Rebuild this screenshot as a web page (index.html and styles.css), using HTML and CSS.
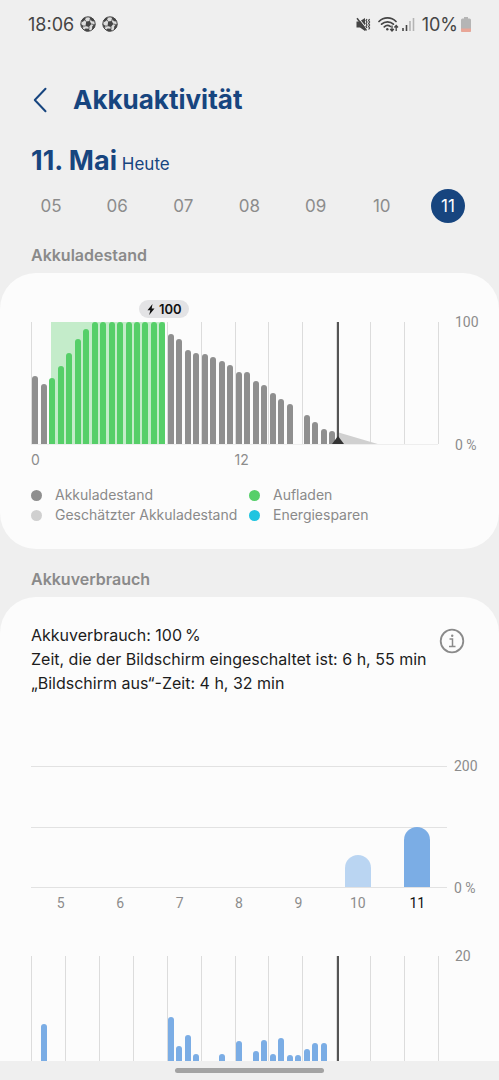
FILE: index.html
```html
<!DOCTYPE html>
<html lang="de">

<head>
    <meta charset="UTF-8">
    <meta name="viewport" content="width=device-width, initial-scale=1.0">
    <title>Akkuaktivität</title>
    <link rel="stylesheet" href="styles.css">
</head>

<body>
    <div class="status-bar">
        <div class="status-left">
            <span>18:06</span>
            <svg class="ball" viewBox="0 0 16 16">
                <circle cx="8" cy="8" r="7.2" fill="#dcdcdc" stroke="#454545" />
                <path d="M6.200 5.600 9.800 5l1.500 3-2.300 2.900-3.500-.8zM1 5l2.500-3.200L6 1.500 5 4 2.500 6zM9.500.8l4 2 1.200 2.700-2.700-.3L10 3zM15.400 8l-.8 3.500-2.600 2.300.2-3.300 1.600-2zM5.500 12.500l3.500.3.8 2.200-3.300.4-2.500-1.400zM.6 8l2.200 1.200.6 3L1.500 11z" fill="#454545" />
                <path d="M6.200 5.600 5 4M9.800 5l.4-2M11.300 8l2.500.5M9 10.900v2M5.500 10.100 3 10" stroke="#454545" stroke-width=".8" />
            </svg>
            <svg class="ball" viewBox="0 0 16 16">
                <circle cx="8" cy="8" r="7.2" fill="#dcdcdc" stroke="#454545" />
                <path d="M6.200 5.600 9.800 5l1.500 3-2.300 2.900-3.500-.8zM1 5l2.500-3.200L6 1.500 5 4 2.500 6zM9.500.8l4 2 1.200 2.700-2.700-.3L10 3zM15.400 8l-.8 3.500-2.600 2.300.2-3.300 1.600-2zM5.500 12.500l3.500.3.8 2.200-3.300.4-2.500-1.400zM.6 8l2.200 1.200.6 3L1.500 11z" fill="#454545" />
                <path d="M6.200 5.600 5 4M9.800 5l.4-2M11.300 8l2.500.5M9 10.900v2M5.500 10.100 3 10" stroke="#454545" stroke-width=".8" />
            </svg>
        </div>
        <div class="status-right">
            <svg class="mute" width="15" height="15" viewBox="0 0 15 15">
                <path d="M.5 4.500h3L9 1v13L4 10.500H.5z" fill="#454545" />
                <path d="M2 .5 12 13" stroke="#efefef" stroke-width="1.200" />
                <path d="M1 1.300 10.500 13.500" stroke="#454545" stroke-width="1.500" />
                <path d="M11 2l-1 1.500 1 1.500-1 1.500 1 1.500-1 1.500 1 1.500M13.600 2l-1 1.500 1 1.500-1 1.500 1 1.500-1 1.500 1 1.500-1 1.500" fill="none" stroke="#454545" stroke-width="1.200" />
            </svg>
            <svg width="21" height="16" viewBox="0 0 21 16">
                <path d="M1 5.500a12 12 0 0 1 17 0M3.600 8.200a8.400 8.400 0 0 1 11.800 0M6.300 10.800a4.600 4.600 0 0 1 6 -.4" fill="none" stroke="#454545" stroke-width="1.700" stroke-linecap="round" />
                <circle cx="9.300" cy="13.200" r="1.200" fill="#454545" />
                <path d="M14 9.500v5M12.200 13l1.800 2 1.800-2M18.200 15v-5M16.400 11.500l1.800-2 1.800 2" fill="none" stroke="#454545" stroke-width="1.300" />
            </svg>
            <svg width="13" height="14" viewBox="0 0 13 14">
                <path d="M1 11v3M4.500 8v6" stroke="#454545" stroke-width="1.600" />
                <path d="M8 4v10M11.500 1v13" stroke="#b4b4b4" stroke-width="1.600" />
            </svg>
            <span class="percent">10%</span>
            <svg width="10" height="15" viewBox="0 0 10 15">
                <path d="M3 0h4v1.500h1.500A1.500 1.500 0 0 1 10 3v10.500a1.500 1.500 0 0 1-1.500 1.500h-7A1.500 1.500 0 0 1 0 13.500V3a1.500 1.500 0 0 1 1.500-1.500H3z" fill="#b5b5b5" />
                <path d="M0 11.500h10v2a1.500 1.500 0 0 1-1.500 1.500h-7A1.500 1.500 0 0 1 0 13.500z" fill="#e9a697" />
            </svg>
        </div>
    </div>

    <header class="header">
        <button type="button" class="back" aria-label="Zurück">
            <svg width="14" height="26" viewBox="0 0 14 26">
                <path d="M12.500 1.800 1.800 13l10.700 11.200" fill="none" stroke="#17457f" stroke-width="2" stroke-linecap="round" stroke-linejoin="round" />
            </svg>
        </button>
        <h1>Akkuaktivität</h1>
    </header>

    <div class="date">
        <strong>11. Mai</strong>
        <span>Heute</span>
    </div>

    <nav class="days">
        <button type="button" class="day">05</button>
        <button type="button" class="day">06</button>
        <button type="button" class="day">07</button>
        <button type="button" class="day">08</button>
        <button type="button" class="day">09</button>
        <button type="button" class="day">10</button>
        <button type="button" class="day selected">11</button>
    </nav>

    <h2>Akkuladestand</h2>
    <section class="card level-card">
        <div class="chart">
            <div class="plot" id="level">
                <div class="charging"></div>
                <svg class="estimate" viewBox="0 0 40 12" preserveAspectRatio="none">
                    <path d="M0 0 40 12H0z" fill="#d0d0d0" />
                </svg>
                <div class="now marker"></div>
                <div class="bubble">
                    <svg width="8" height="11" viewBox="0 0 8 11">
                        <path d="M5.500 0 .5 6.200h2.800L2.200 11l5.300-6.500H4.700z" fill="#111" />
                    </svg>
                    100
                </div>
            </div>
            <div class="scale"><span>100</span><span>0 %</span></div>
        </div>
        <div class="hours"><span>0</span><span>12</span></div>
        <ul class="legend">
            <li><i class="dot gray"></i>Akkuladestand</li>
            <li><i class="dot green"></i>Aufladen</li>
            <li><i class="dot light"></i>Geschätzter Akkuladestand</li>
            <li><i class="dot cyan"></i>Energiesparen</li>
        </ul>
    </section>

    <h2>Akkuverbrauch</h2>
    <section class="card usage-card">
        <div class="summary">
            <p>
                Akkuverbrauch: 100&#8239;%<br>
                Zeit, die der Bildschirm eingeschaltet ist: 6 h, 55 min<br>
                „Bildschirm aus“-Zeit: 4 h, 32 min
            </p>
            <button type="button" class="info" aria-label="Info">
                <svg width="26" height="26" viewBox="0 0 26 26" fill="none" stroke="#8a8a8a">
                    <circle cx="13" cy="13" r="11.300" stroke-width="1.800" />
                    <path d="M10.500 11h3v7.500M10 18.500h6.500" stroke-width="1.500" />
                    <circle cx="13.200" cy="7.800" r="1.200" fill="#8a8a8a" stroke="none" />
                </svg>
            </button>
        </div>

        <div class="chart week">
            <div class="week-plot" id="week"></div>
            <div class="scale"><span>200</span><span>0 %</span></div>
        </div>
        <div class="week-days">
            <span>5</span><span>6</span><span>7</span><span>8</span><span>9</span><span>10</span><span class="today">11</span>
        </div>

        <div class="chart">
            <div class="plot" id="usage">
                <div class="now"></div>
            </div>
            <div class="scale"><span>20</span></div>
        </div>
    </section>

    <div class="gesture-bar"><div class="handle"></div></div>

    <script src="script.js"></script>
</body>

</html>
```
FILE: styles.css
```css
* {
    box-sizing: border-box;
}

body {
    margin: 0;
    min-height: 100vh;
    background-color: #efefef;
    color: #1c1c1c;
    font-family: Inter, Roboto, sans-serif;
    font-size: 16px;
}

button {
    padding: 0;
    border: none;
    background: none;
    font-family: inherit;
    cursor: pointer;
}

svg {
    display: block;
    flex: none;
}

.status-bar {
    display: flex;
    justify-content: space-between;
    align-items: center;
    height: 48px;
    padding: 0 28px;
    color: #454545;
    font-size: 18px;
}

.status-left,
.status-right {
    display: flex;
    align-items: center;
    gap: 6px;
}

.status-right {
    gap: 3px;
}

.mute {
    margin-right: 4px;
}

.percent {
    margin-left: 4px;
}

.ball {
    width: 16px;
    height: 16px;
}

.header {
    display: flex;
    align-items: center;
    gap: 26px;
    height: 96px;
    padding: 7px 33px 0;
}

h1 {
    margin: 0;
    color: #17457f;
    font-size: 26px;
    font-weight: 700;
}

.date {
    height: 36px;
    padding: 0 31px;
    color: #17457f;
    font-size: 17px;
    line-height: 34px;
}

.date strong {
    font-size: 27px;
}

.days {
    display: flex;
    justify-content: space-between;
    margin: 9px 0 0;
    padding: 0 34px;
}

.day {
    width: 34px;
    height: 34px;
    border-radius: 50%;
    color: #8c8c8c;
    font-size: 17px;
}

.day.selected {
    background: #17457f;
    color: #fff;
}

h2 {
    margin: 0;
    padding: 20px 31px 8px;
    color: #8a8a8a;
    font-size: 16px;
    font-weight: 600;
    line-height: 20px;
}

.days + h2 {
    padding-top: 22px;
}

.card {
    padding: 49px 20px 0 31px;
    border-radius: 36px;
    background: #fcfcfc;
}

.level-card {
    padding-bottom: 24px;
}

.chart {
    display: grid;
    grid-template-columns: 1fr 24px;
    gap: 17px;
}

.plot {
    position: relative;
    display: grid;
    grid-template-columns: repeat(48, 1fr);
    align-items: end;
    justify-items: center;
    height: 123px;
    border-bottom: 1px solid #eee;
}

/* hour lines, one every two hours */
.line {
    position: absolute;
    top: 0;
    bottom: 0;
    width: 1px;
    background: #dcdcdc;
}

.bar {
    position: relative;
    width: 6px;
    border-radius: 3px 3px 0 0;
    background: #8f8f8f;
}

.bar.charge {
    background: #56cf69;
}

#usage .bar {
    background: #7bade5;
}

.charging {
    position: absolute;
    top: 0;
    bottom: 0;
    left: 5%;
    width: 28%;
    background: #c4ecca;
}

.now {
    position: absolute;
    top: 0;
    bottom: 0;
    left: 75.2%;
    width: 2px;
    background: #555;
    z-index: 1;
}

.marker::after {
    content: "";
    position: absolute;
    bottom: 0;
    left: -5px;
    border: 6px solid transparent;
    border-top: none;
    border-bottom: 8px solid #333;
}

.estimate {
    position: absolute;
    bottom: 0;
    left: 75.2%;
    width: 10%;
    height: 12px;
}

.bubble {
    position: absolute;
    top: -22px;
    left: 26.6%;
    display: flex;
    align-items: center;
    justify-content: center;
    gap: 4px;
    width: 50px;
    height: 18px;
    border-radius: 9px;
    background: #e3e3e5;
    color: #111;
    font-size: 13px;
    font-weight: 600;
}

.scale {
    display: flex;
    flex-direction: column;
    justify-content: space-between;
    margin: -8px 0;
    color: #8c8c8c;
    font-family: Roboto, sans-serif;
    font-size: 14px;
    line-height: 16px;
    white-space: nowrap;
}

.hours {
    display: grid;
    grid-template-columns: 1fr 1fr;
    margin-right: 41px;
    color: #8c8c8c;
    font-size: 14px;
    line-height: 30px;
}

.legend {
    display: grid;
    grid-template-columns: 218px 1fr;
    margin: 10px 0 0;
    padding: 0;
    list-style: none;
    color: #8a8a8a;
    font-size: 14px;
    line-height: 20px;
}

.legend li {
    display: flex;
    align-items: center;
    gap: 13px;
    white-space: nowrap;
}

.dot {
    width: 11px;
    height: 11px;
    border-radius: 50%;
}

.gray {
    background: #8f8f8f;
}

.green {
    background: #56cf69;
}

.light {
    background: #d0d0d0;
}

.cyan {
    background: #1fc4e0;
}

.usage-card {
    padding-top: 26px;
    border-radius: 36px 36px 0 0;
}

.summary {
    display: flex;
    justify-content: space-between;
    align-items: flex-start;
    padding-right: 14px;
}

.summary p {
    margin: 0;
    line-height: 24px;
    white-space: nowrap;
}

.info {
    margin-top: 5px;
}

.week {
    grid-template-columns: 1fr 25px;
    gap: 7px;
    margin-top: 71px;
}

.week-plot {
    display: grid;
    grid-template-columns: repeat(7, 1fr);
    align-items: end;
    justify-items: center;
    height: 122px;
    border-top: 1px solid #e2e2e2;
    border-bottom: 1px solid #e2e2e2;
    background: linear-gradient(#e2e2e2, #e2e2e2) center / 100% 1px no-repeat;
}

.week-bar {
    width: 26px;
    border-radius: 13px 13px 0 0;
    background: #bad5f2;
}

.week-bar.today {
    background: #7bade5;
}

.week-days {
    display: grid;
    grid-template-columns: repeat(7, 1fr);
    margin: 0 32px 38px 0;
    color: #8c8c8c;
    font-family: Roboto, sans-serif;
    font-size: 14px;
    line-height: 30px;
    text-align: center;
}

.week-days .today {
    color: #111;
}

.gesture-bar {
    position: fixed;
    bottom: 0;
    left: 0;
    right: 0;
    display: flex;
    justify-content: center;
    align-items: center;
    height: 19px;
    background: #efefef;
    z-index: 2;
}

.handle {
    width: 30%;
    height: 5px;
    border-radius: 3px;
    background: #a3a3a3;
}
```
FILE: script.js
```js
// one value per half hour, in percent of the plot height
const level = [
    56, 49, 54, 64, 75, 86, 94, 100, 100, 100, 100, 100, 100, 100, 100, 100,
    90, 86, 77, 75, 74, 71, 68, 65, 59, 59, 52, 48, 42, 37, 33, 0,
    24, 18, 12, 11, 0, 0, 0, 0, 0, 0, 0, 0, 0, 0, 0, 0
];
const usage = [
    0, 44, 0, 0, 0, 0, 0, 0, 0, 0, 0, 0, 0, 0, 0, 0,
    50, 26, 35, 20, 0, 0, 20, 0, 30, 0, 22, 31, 20, 33, 19, 19,
    24, 29, 29, 0, 0, 0, 0, 0, 0, 0, 0, 0, 0, 0, 0, 0
];
const week = [0, 0, 0, 0, 0, 27, 50];

function addBars(id, values, getClass) {
    const plot = document.getElementById(id);
    values.forEach((value, i) => {
        const bar = document.createElement("div");
        bar.className = getClass(i);
        bar.style.height = value + "%";
        plot.append(bar);
    });
}

function addLines(id) {
    const plot = document.getElementById(id);
    for (let i = 0; i <= 12; i++) {
        const line = document.createElement("div");
        line.className = "line";
        line.style.left = (i / 12) * 100 + "%";
        plot.prepend(line);
    }
}

addLines("level");
addLines("usage");
addBars("level", level, i => (i >= 2 && i <= 15 ? "bar charge" : "bar"));
addBars("usage", usage, () => "bar");
addBars("week", week, i => (i === 6 ? "week-bar today" : "week-bar"));
```
